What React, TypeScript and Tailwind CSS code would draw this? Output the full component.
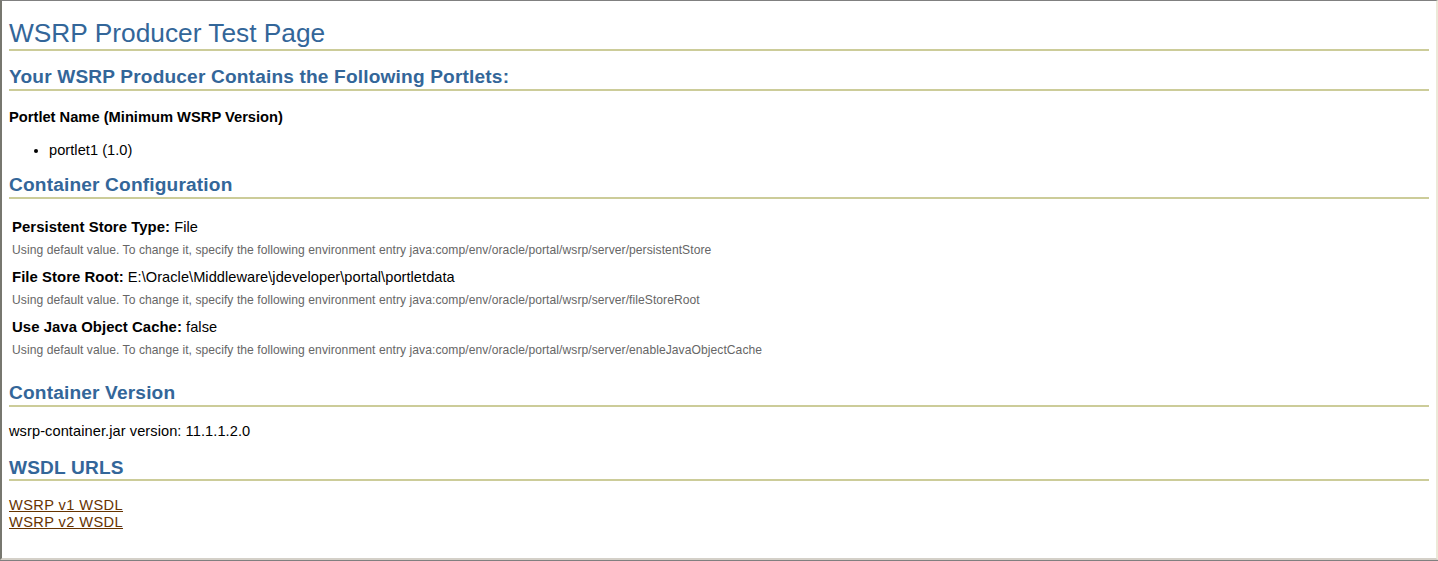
import React from 'react';

const configItems = [
  {
    label: 'Persistent Store Type:',
    value: 'File',
    entry: 'java:comp/env/oracle/portal/wsrp/server/persistentStore',
  },
  {
    label: 'File Store Root:',
    value: 'E:\\Oracle\\Middleware\\jdeveloper\\portal\\portletdata',
    entry: 'java:comp/env/oracle/portal/wsrp/server/fileStoreRoot',
  },
  {
    label: 'Use Java Object Cache:',
    value: 'false',
    entry: 'java:comp/env/oracle/portal/wsrp/server/enableJavaObjectCache',
  },
];

function SubHeading({ children, className = '' }: { children: React.ReactNode; className?: string }) {
  return (
    <h2
      className={`text-[19.1px] leading-[22px] font-bold tracking-[0.17px] text-[#336699] border-b-2 border-[#cccc99] ${className}`}
    >
      {children}
    </h2>
  );
}

export default function App() {
  return (
    <div
      className="w-[1438px] h-[561px] overflow-hidden bg-white border-b border-[#808080]"
      style={{ fontFamily: '"Liberation Sans", Arial, sans-serif' }}
    >
      <div className="h-[560px] border-t border-l-2 border-r-2 border-b-2 border-t-[#808080] border-l-[#77776f] border-r-[#ece9d8] border-b-[#d4d0c8] pl-[7px] pr-[7px] text-black">
        {/* Page title */}
        <h1 className="mt-[17px] text-[26.3px] leading-[30px] font-normal text-[#336699] pb-px border-b-2 border-[#cccc99]">
          WSRP Producer Test Page
        </h1>

        {/* Portlets */}
        <SubHeading className="mt-[15px] pb-px">Your WSRP Producer Contains the Following Portlets:</SubHeading>
        <div className="mt-[17.5px] text-[14.7px] leading-[17px] font-bold">Portlet Name (Minimum WSRP Version)</div>
        <ul className="mt-[16.5px] list-disc pl-[40px] text-[14.6px] leading-[17px] tracking-[0.05px]">
          <li>portlet1 (1.0)</li>
        </ul>

        {/* Container configuration */}
        <SubHeading className="mt-[15px] pb-px">Container Configuration</SubHeading>
        <div className="pl-[3px]">
          {configItems.map((item, i) => (
            <div key={item.label} className={i === 0 ? 'mt-[20px]' : 'mt-[12.5px]'}>
              <div className="text-[14.6px] leading-[17px] tracking-[0.05px]">
                <span className="font-bold text-[14.9px]">{item.label}</span> {item.value}
              </div>
              <div className="mt-[6.5px] text-[12.1px] leading-[14px] tracking-[0.06px] text-[#666666]">
                Using default value. To change it, specify the following environment entry {item.entry}
              </div>
            </div>
          ))}
        </div>

        {/* Version */}
        <SubHeading className="mt-[25px] pb-px">Container Version</SubHeading>
        <div className="mt-[16.5px] text-[14.6px] leading-[17px] tracking-[0.08px]">wsrp-container.jar version: 11.1.1.2.0</div>

        {/* WSDL */}
        <SubHeading className="mt-[16.5px]">WSDL URLS</SubHeading>
        <div className="mt-[16px] text-[14.6px] leading-[17px] tracking-[0.4px]">
          <a href="#" className="text-[#663300] underline">WSRP v1 WSDL</a>
          <br />
          <a href="#" className="text-[#663300] underline">WSRP v2 WSDL</a>
        </div>
      </div>
    </div>
  );
}
